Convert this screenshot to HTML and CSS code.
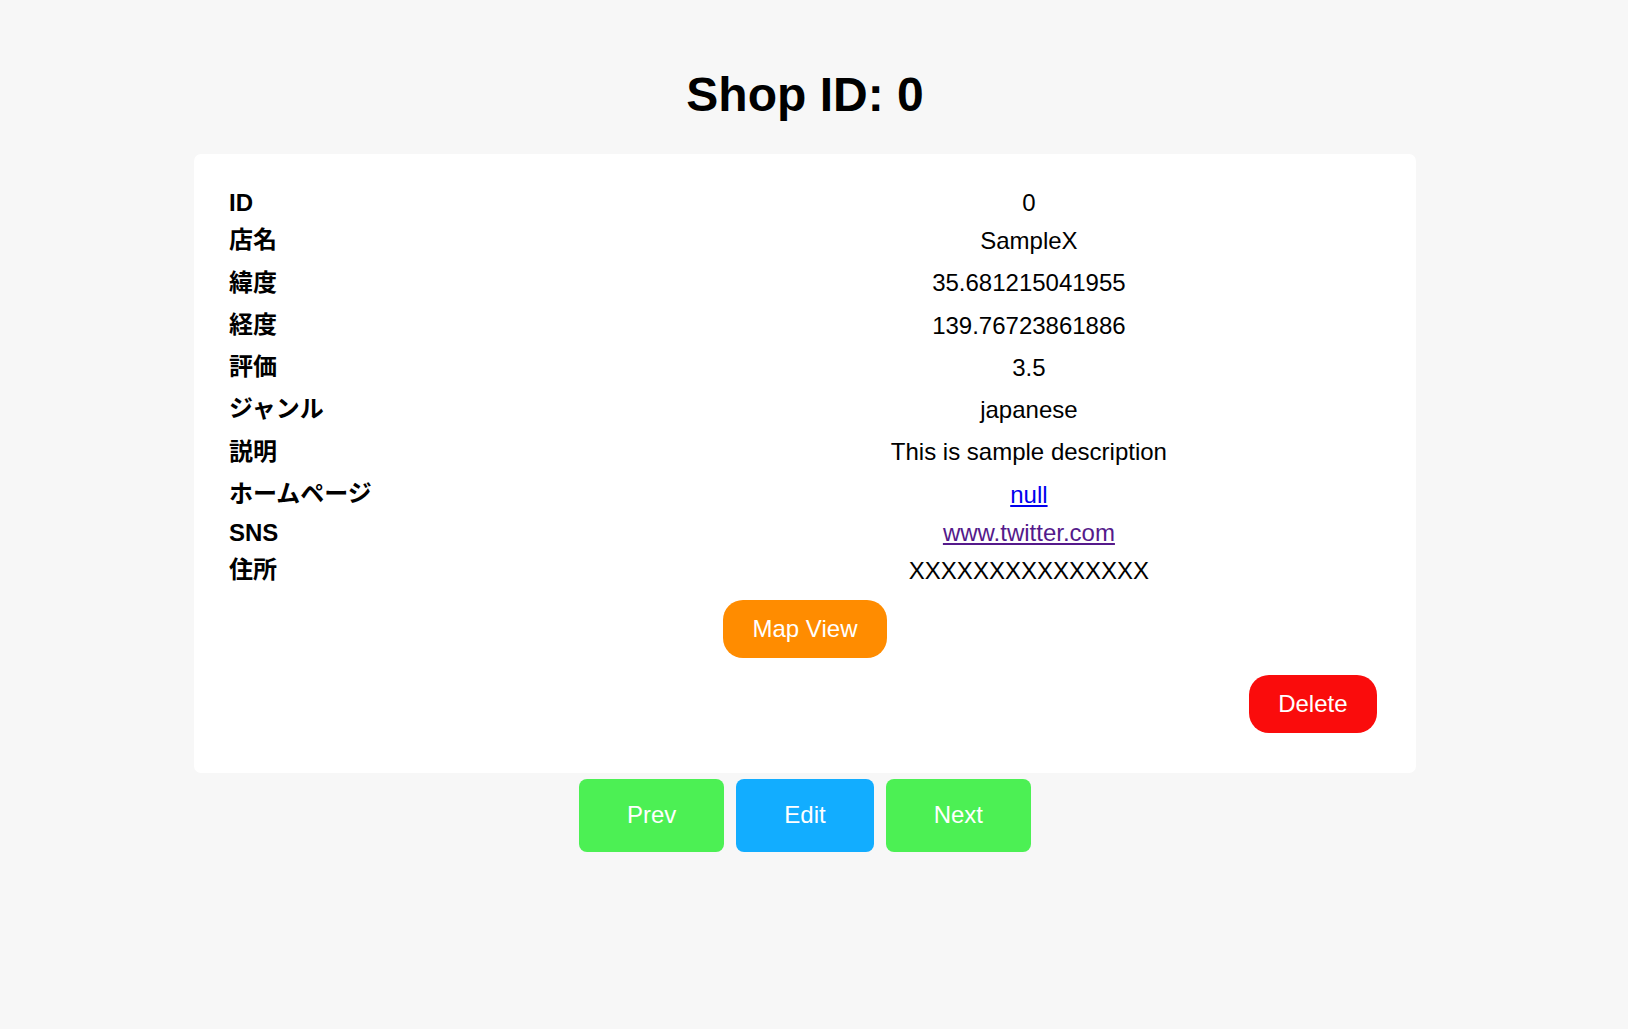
FILE: index.html
```html
<!DOCTYPE html>
<html lang="ja">
<head>
<meta charset="utf-8">
<title>Shop ID: 0</title>
<link rel="stylesheet" href="styles.css">
</head>
<body>
<div class="page">
  <h1 class="title">Shop ID: 0</h1>
  <div class="card">
    <table class="info">
      <tbody>
        <tr><th class="label">ID</th><td class="value">0</td></tr>
        <tr><th class="label ja">店名</th><td class="value">SampleX</td></tr>
        <tr><th class="label ja">緯度</th><td class="value">35.681215041955</td></tr>
        <tr><th class="label ja">経度</th><td class="value">139.76723861886</td></tr>
        <tr><th class="label ja">評価</th><td class="value">3.5</td></tr>
        <tr><th class="label ja">ジャンル</th><td class="value">japanese</td></tr>
        <tr><th class="label ja">説明</th><td class="value">This is sample description</td></tr>
        <tr><th class="label ja">ホームページ</th><td class="value"><a class="link" href="#null">null</a></td></tr>
        <tr><th class="label">SNS</th><td class="value"><a class="link visited" href="#sns">www.twitter.com</a></td></tr>
        <tr><th class="label ja">住所</th><td class="value">XXXXXXXXXXXXXXX</td></tr>
      </tbody>
    </table>
    <div class="map-row">
      <button class="pill map">Map View</button>
    </div>
    <div class="delete-row">
      <button class="pill delete">Delete</button>
    </div>
  </div>
  <nav class="nav">
    <button class="nav-btn green">Prev</button>
    <button class="nav-btn blue">Edit</button>
    <button class="nav-btn green">Next</button>
  </nav>
</div>
</body>
</html>
```

FILE: styles.css
```css
html, body {
  margin: 0;
  padding: 0;
  background: #f7f7f7;
}

body {
  font-family: "Liberation Sans", "Noto Sans CJK JP", sans-serif;
  color: #000;
}

.page {
  width: 1610px;
  padding-top: 35px;
}

.title {
  font-size: 48px;
  font-weight: bold;
  text-align: center;
  margin: 32px 0;
  line-height: normal;
}

.card {
  width: 1222px;
  box-sizing: border-box;
  margin: 0 auto;
  padding: 31px 32px 32px;
  background: #fff;
  border-radius: 7px;
}

.info {
  width: 100%;
  border-spacing: 2px;
  font-size: 24px;
}

.info th,
.info td {
  padding: 2px 1px;
}

.label {
  width: 38.7%;
  text-align: left;
  font-weight: bold;
}

.info .ja {
  line-height: 32px;
  padding: 3.35px 1px 4.9px;
}

.value {
  text-align: center;
  font-weight: normal;
}

.link {
  color: #0000ee;
  text-decoration: underline;
}

.link.visited {
  color: #551a8b;
}

.map-row {
  display: flex;
  justify-content: center;
}

.delete-row {
  display: flex;
  justify-content: flex-end;
}

.pill {
  font-family: "Liberation Sans", sans-serif;
  font-size: 24px;
  line-height: normal;
  color: #fff;
  border: none;
  border-radius: 20px;
  padding: 15px 29.5px;
  margin: 9px;
  cursor: pointer;
}

.map {
  background: #ff8c00;
  margin-top: 7px;
}

.delete {
  background: #fa0c0c;
  margin-top: 8px;
  margin-right: 7px;
  margin-bottom: 8px;
}

.nav {
  display: flex;
  justify-content: center;
  gap: 12px;
  margin-top: 6px;
}

.nav-btn {
  font-family: "Liberation Sans", sans-serif;
  font-size: 24px;
  line-height: normal;
  color: #fff;
  border: none;
  border-radius: 8px;
  padding: 22.5px 48px;
  cursor: pointer;
}

.green {
  background: #4cf054;
}

.blue {
  background: #12adff;
}
```
